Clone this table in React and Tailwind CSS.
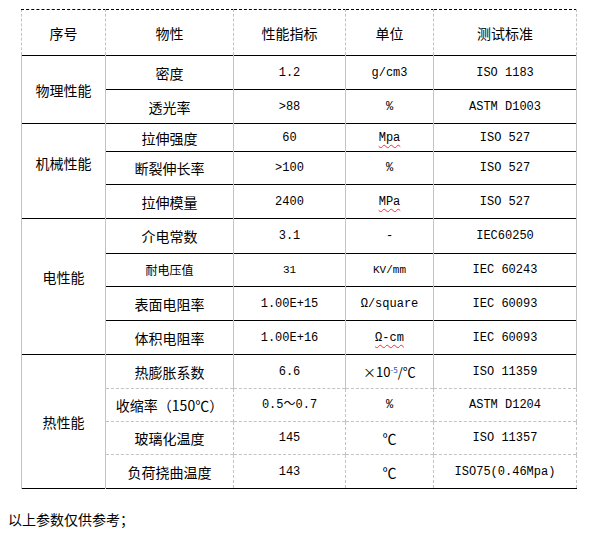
const cjk = { fontFamily: '"Noto Sans CJK SC", "Noto Sans", sans-serif' };
const mono = { fontFamily: '"Liberation Mono", "Noto Sans CJK SC", monospace' };

const spell = "underline decoration-wavy decoration-red-500 decoration-1 underline-offset-[3px]";

const groups = [
  {
    name: "物理性能",
    shift: "pb-0",
    rows: [
      { h: "h-[34px]", prop: "密度", val: "1.2", unit: "g/cm3", std: "ISO 1183" },
      { h: "h-[34px]", prop: "透光率", val: ">88", unit: "%", std: "ASTM D1003" },
    ],
  },
  {
    name: "机械性能",
    shift: "pb-[17px]",
    rows: [
      { h: "h-[28px]", prop: "拉伸强度", val: "60", unit: "Mpa", std: "ISO 527", wavy: true },
      { h: "h-[33px]", prop: "断裂伸长率", val: ">100", unit: "%", std: "ISO 527" },
      { h: "h-[34px]", prop: "拉伸模量", val: "2400", unit: "MPa", std: "ISO 527", wavy: true },
    ],
  },
  {
    name: "电性能",
    shift: "pb-[20px]",
    rows: [
      { h: "h-[35px]", prop: "介电常数", val: "3.1", unit: "-", std: "IEC60250" },
      { h: "h-[33px]", prop: "耐电压值", val: "31", unit: "KV/mm", std: "IEC 60243", small: true },
      { h: "h-[34px]", prop: "表面电阻率", val: "1.00E+15", unit: "Ω/square", std: "IEC 60093" },
      { h: "h-[34px]", prop: "体积电阻率", val: "1.00E+16", unit: "Ω-cm", std: "IEC 60093", wavy: true },
    ],
  },
  {
    name: "热性能",
    shift: "pb-0",
    soft: true,
    rows: [
      { h: "h-[34px]", prop: "热膨胀系数", val: "6.6", unit: "expansion", std: "ISO 11359" },
      { h: "h-[33px]", prop: "收缩率（150℃）", val: "0.5～0.7", unit: "%", std: "ASTM D1204" },
      { h: "h-[33px]", prop: "玻璃化温度", val: "145", unit: "℃", std: "ISO 11357" },
      { h: "h-[34px]", prop: "负荷挠曲温度", val: "143", unit: "℃", std: "ISO75(0.46Mpa)" },
    ],
  },
];

const side = "border-x border-dashed border-x-[#c3c3c3]";

function unitCell(row) {
  if (row.unit === "expansion") {
    return {
      font: cjk,
      size: "text-[13px]",
      body: (
        <>
          ×10<sup className="text-[8px] text-[#1f4fbf]">-5</sup>/℃
        </>
      ),
    };
  }
  if (row.unit === "℃") return { font: cjk, size: "text-[14px]", body: "℃" };
  return {
    font: mono,
    size: row.small ? "text-[11px]" : "text-[12px]",
    body: row.wavy ? <span className={spell}>{row.unit}</span> : row.unit,
  };
}

export default function App() {
  return (
    <div className="w-[610px] h-[538px] bg-white text-black">
      <table className="ml-[21px] mt-[9px] w-[555px] border-collapse table-fixed border-b border-b-black">
        <colgroup>
          <col className="w-[84px]" />
          <col className="w-[128px]" />
          <col className="w-[112px]" />
          <col className="w-[88px]" />
          <col className="w-[143px]" />
        </colgroup>
        <thead>
          <tr className="h-[46px]">
            {["序号", "物性", "性能指标", "单位", "测试标准"].map((t) => (
              <th key={t} style={cjk} className={`${side} border-t border-t-black font-normal text-[14px] leading-[18px] text-center align-middle`}>
                {t}
              </th>
            ))}
          </tr>
        </thead>
        <tbody>
          {groups.map((g) =>
            g.rows.map((r, i) => {
              const top = g.soft && i > 0 ? "border-t border-dashed border-t-[#c3c3c3]" : "border-t border-solid border-t-black";
              const cell = `${side} ${top} text-center align-middle p-0 leading-[18px]`;
              const u = unitCell(r);
              return (
                <tr key={r.prop} className={r.h}>
                  {i === 0 && (
                    <td rowSpan={g.rows.length} style={cjk} className={`${side} border-t border-solid border-t-black text-center align-middle text-[14px] leading-[18px] ${g.shift}`}>
                      {g.name}
                    </td>
                  )}
                  <td style={cjk} className={`${cell} ${r.small ? "text-[12px]" : "text-[14px]"}`}>
                    {r.prop}
                  </td>
                  <td style={mono} className={`${cell} ${r.small ? "text-[11px]" : "text-[12px]"}`}>
                    {r.val}
                  </td>
                  <td style={u.font} className={`${cell} ${u.size}`}>
                    {u.body}
                  </td>
                  <td style={mono} className={`${cell} text-[12px]`}>
                    {r.std}
                  </td>
                </tr>
              );
            })
          )}
        </tbody>
      </table>
      <p style={cjk} className="pl-[8px] mt-[22px] text-[14px] leading-[16px]">
        以上参数仅供参考；
      </p>
    </div>
  );
}
